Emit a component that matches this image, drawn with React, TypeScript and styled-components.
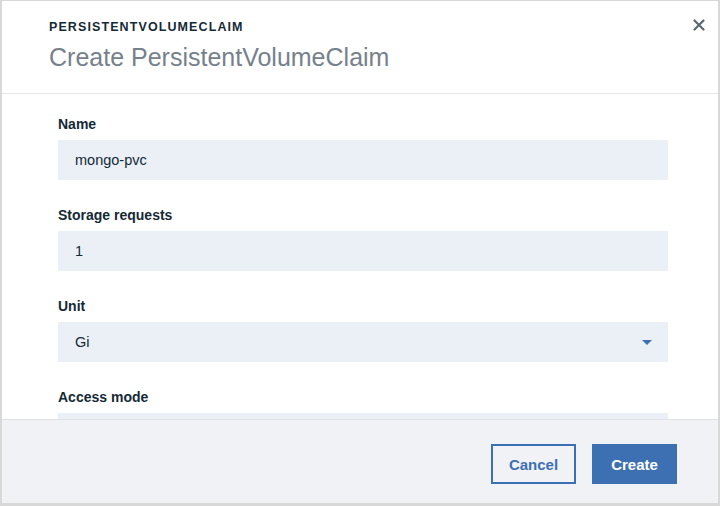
import React from "react";
import styled, { createGlobalStyle } from "styled-components";

const GlobalStyle = createGlobalStyle`
    html, body {
        margin: 0;
        padding: 0;
        background: #d8d8d8;
    }

    * {
        box-sizing: border-box;
    }
`;

const fields = [
    { label: "Name", value: "mongo-pvc" },
    { label: "Storage requests", value: "1" },
    { label: "Unit", value: "Gi", select: true },
    { label: "Access mode", value: "" },
];

const App = () => {
    return (
        <>
            <GlobalStyle />
            <Frame>
                <Modal>
                    <Header>
                        <div>
                            <Kicker>PERSISTENTVOLUMECLAIM</Kicker>
                            <Title>Create PersistentVolumeClaim</Title>
                        </div>
                        <CloseButton aria-label="Close">
                            <svg width="12" height="12" viewBox="0 0 12 12">
                                <path
                                    d="M1.5 1.5 L10.5 10.5 M10.5 1.5 L1.5 10.5"
                                    stroke="#5a6872"
                                    strokeWidth="2.2"
                                    strokeLinecap="round"
                                />
                            </svg>
                        </CloseButton>
                    </Header>

                    <Body>
                        {fields.map((f) => (
                            <Field key={f.label}>
                                <Label>{f.label}</Label>
                                <Input $select={f.select}>
                                    <span>{f.value}</span>
                                    {f.select && (
                                        <svg width="10" height="5" viewBox="0 0 10 5">
                                            <path d="M0 0 L10 0 L5 5 Z" fill="#3d70b2" />
                                        </svg>
                                    )}
                                </Input>
                            </Field>
                        ))}
                    </Body>

                    <Footer>
                        <Button $kind="secondary">Cancel</Button>
                        <Button $kind="primary">Create</Button>
                    </Footer>
                </Modal>
            </Frame>
        </>
    );
};

const Frame = styled.div`
    height: 506px;
    padding: 1px 2px 3px 2px;
`;

const Modal = styled.div`
    height: 100%;
    display: flex;
    flex-direction: column;
    background: #ffffff;
    font-family: "Liberation Sans", Arial, sans-serif;
    color: #152935;
`;

const Header = styled.header`
    height: 93px;
    flex: none;
    display: flex;
    justify-content: space-between;
    align-items: flex-start;
    padding: 18px 13px 0 47px;
    border-bottom: 1px solid #e4e6e8;
`;

const Kicker = styled.div`
    font-size: 12.5px;
    font-weight: 700;
    line-height: 16px;
    letter-spacing: 1.1px;
    color: #152935;
`;

const Title = styled.h1`
    margin: 7px 0 0;
    font-size: 25px;
    font-weight: 400;
    line-height: 31px;
    color: #76818b;
`;

const CloseButton = styled.button`
    border: none;
    background: none;
    padding: 0;
    width: 12px;
    height: 12px;
    display: flex;
    cursor: pointer;
`;

const Body = styled.main`
    flex: 1;
    overflow: hidden;
    padding: 22px 50px 0 56px;
`;

const Field = styled.div`
    display: flex;
    flex-direction: column;
    gap: 8px;
    margin-bottom: 27px;
`;

const Label = styled.label`
    font-size: 14px;
    font-weight: 700;
    line-height: 16px;
    color: #152935;
`;

const Input = styled.div<{ $select?: boolean }>`
    height: 40px;
    display: flex;
    align-items: center;
    justify-content: space-between;
    padding: 0 16px 0 17px;
    background: #ebf0f7;
    font-size: 14.5px;
    color: #152935;
    cursor: ${(p) => (p.$select ? "pointer" : "text")};
`;

const Footer = styled.footer`
    height: 84px;
    flex: none;
    display: flex;
    justify-content: flex-end;
    align-items: center;
    gap: 16px;
    padding: 5px 41px 0 0;
    background: #f0f2f6;
    border-top: 1px solid #dfe3e6;
`;

const Button = styled.button<{ $kind: "primary" | "secondary" }>`
    width: 85px;
    height: 40px;
    font-family: "Liberation Sans", Arial, sans-serif;
    font-size: 15px;
    font-weight: 700;
    border: 2px solid #3d70b2;
    background: ${(p) => (p.$kind === "primary" ? "#3d70b2" : "transparent")};
    color: ${(p) => (p.$kind === "primary" ? "#ffffff" : "#3d70b2")};
    cursor: pointer;
`;

export default App;
